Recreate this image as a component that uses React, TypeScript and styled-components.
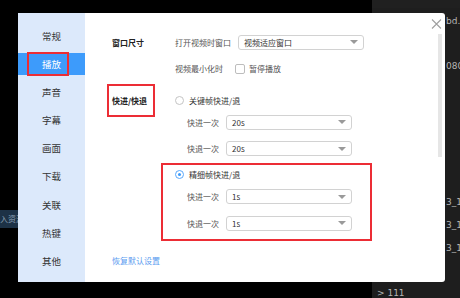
import styled, { createGlobalStyle, css } from "styled-components";

const GlobalStyle = createGlobalStyle`
  html, body {
    margin: 0;
    padding: 0;
    background: #000;
    width: 460px;
    height: 298px;
    overflow: hidden;
  }
  body {
    font-family: "Noto Sans CJK SC", "Noto Sans", sans-serif;
  }
`;

const redMark = css`
  position: relative;
  &::after {
    content: "";
    position: absolute;
    border: 2px solid #ec2d35;
    pointer-events: none;
  }
`;

const Desktop = styled.div`
  position: relative;
  width: 460px;
  height: 298px;
  display: grid;
  grid-template-columns: 372px 88px;
`;

const LeftPane = styled.div`
  background: #000;
  padding-top: 210px;
`;

const ImportBar = styled.div`
  width: 40px;
  height: 18px;
  background: #1d3246;
  color: #8ea2b6;
  font-size: 8px;
  line-height: 18px;
  white-space: nowrap;
  overflow: hidden;
`;

const RightPane = styled.div`
  background: #1e1e1e;
  display: flex;
  flex-direction: column;
  color: #b4b4b4;
  font-family: "DejaVu Sans", sans-serif;
  font-size: 9px;
  border-top: 8px solid #202020;
  overflow: hidden;
`;

const PaneLine = styled.div<{ $mt: number; $left?: number }>`
  margin-top: ${(p) => p.$mt}px;
  padding-left: ${(p) => p.$left ?? 74}px;
  height: 12px;
  line-height: 12px;
  white-space: nowrap;
`;

const Dialog = styled.div`
  position: absolute;
  left: 18px;
  top: 13px;
  width: 427px;
  height: 269px;
  background: #fff;
  border-radius: 0 3px 3px 0;
  display: flex;
  overflow: hidden;
`;

const Sidebar = styled.nav`
  width: 67px;
  background: #dce9fb;
  padding-top: 12px;
  display: flex;
  flex-direction: column;
  gap: 6.1px;
`;

const NavItem = styled.div<{ $active?: boolean; $marked?: boolean }>`
  height: 22px;
  display: flex;
  align-items: center;
  justify-content: center;
  font-size: 9.5px;
  color: ${(p) => (p.$active ? "#fff" : "#333")};
  background: ${(p) => (p.$active ? "#3d9bfb" : "transparent")};
  ${(p) =>
    p.$marked &&
    css`
      ${redMark}
      &::after {
        left: 9px;
        right: 16px;
        top: -1px;
        bottom: -1px;
      }
    `}
`;

const Content = styled.div`
  position: relative;
  flex: 1;
  padding: 21px 0 0 27px;
  display: flex;
  flex-direction: column;
`;

const Row = styled.div<{ $mt?: number; $indent?: number }>`
  display: flex;
  align-items: center;
  height: 16px;
  margin-top: ${(p) => p.$mt ?? 0}px;
  padding-left: ${(p) => p.$indent ?? 0}px;
  font-size: 8px;
  color: #555;
  white-space: nowrap;
`;

const SectionLabel = styled.div<{ $marked?: boolean }>`
  width: 63px;
  flex-shrink: 0;
  font-weight: 700;
  color: #222;
  ${(p) =>
    p.$marked &&
    css`
      ${redMark}
      &::after {
        left: -5px;
        width: 44px;
        top: -11px;
        bottom: -11px;
      }
    `}
`;

const FieldLabel = styled.div<{ $w: number }>`
  width: ${(p) => p.$w}px;
  flex-shrink: 0;
`;

const Select = styled.div`
  width: 126px;
  height: 15px;
  box-sizing: border-box;
  border: 1px solid #d2d2d2;
  border-radius: 3px;
  display: flex;
  align-items: center;
  justify-content: space-between;
  padding: 0 5px;
  color: #333;
  font-size: 8px;
  &::after {
    content: "";
    border-left: 4px solid transparent;
    border-right: 4px solid transparent;
    border-top: 4px solid #9a9a9a;
  }
`;

const Checkbox = styled.span`
  width: 10px;
  height: 10px;
  box-sizing: border-box;
  border: 1px solid #bdbdbd;
  border-radius: 2px;
  margin-right: 4px;
`;

const Radio = styled.span<{ $checked?: boolean }>`
  width: 9px;
  height: 9px;
  box-sizing: border-box;
  border-radius: 50%;
  border: 1px solid ${(p) => (p.$checked ? "#5aa8fb" : "#c4c4c4")};
  margin-right: 5px;
  display: flex;
  align-items: center;
  justify-content: center;
  &::after {
    content: "";
    width: 3px;
    height: 3px;
    border-radius: 50%;
    background: ${(p) => (p.$checked ? "#3d9bfb" : "transparent")};
  }
`;

const OptionText = styled.span`
  color: #333;
`;

const OptionGroup = styled.div<{ $mt?: number; $marked?: boolean }>`
  margin-left: 63px;
  width: 196px;
  margin-top: ${(p) => p.$mt ?? 0}px;
  display: flex;
  flex-direction: column;
  ${(p) =>
    p.$marked &&
    css`
      ${redMark}
      &::after {
        left: -14px;
        right: -1px;
        top: -4px;
        bottom: -10px;
      }
    `}
`;

const Section = styled.div<{ $mt?: number }>`
  margin-top: ${(p) => p.$mt ?? 0}px;
  display: flex;
  flex-direction: column;
`;

const ResetLink = styled.a`
  margin-top: 22px;
  font-size: 8px;
  color: #5b9cf0;
  height: 16px;
  line-height: 16px;
  text-decoration: none;
`;

const CloseButton = styled.button`
  position: absolute;
  top: 6px;
  right: 3px;
  width: 11px;
  height: 10px;
  padding: 0;
  border: none;
  background: none;
  display: flex;
`;

const Scrollbar = styled.div`
  position: absolute;
  top: 21px;
  right: 3px;
  width: 4px;
  height: 123px;
  background: #e6e6e6;
`;

const navItems = ["常规", "播放", "声音", "字幕", "画面", "下载", "关联", "热键", "其他"];

const SeekRows = ({ value, firstGap }: { value: string; firstGap: number }) => (
  <>
    <Row $mt={firstGap} $indent={12}>
      <FieldLabel $w={39}>快进一次</FieldLabel>
      <Select>{value}</Select>
    </Row>
    <Row $mt={10.5} $indent={12}>
      <FieldLabel $w={39}>快退一次</FieldLabel>
      <Select>{value}</Select>
    </Row>
  </>
);

export default function App() {
  return (
    <>
      <GlobalStyle />
      <Desktop>
        <LeftPane>
          <ImportBar>入资源</ImportBar>
        </LeftPane>
        <RightPane>
          <PaneLine $mt={7}>bd.c</PaneLine>
          <PaneLine $mt={33}>080</PaneLine>
          <PaneLine $mt={124}>3_10</PaneLine>
          <PaneLine $mt={11}>3_10</PaneLine>
          <PaneLine $mt={11}>3_11</PaneLine>
          <PaneLine $mt={33} $left={5}>
            &gt; 111
          </PaneLine>
        </RightPane>

        <Dialog>
          <Sidebar>
            {navItems.map((item) => (
              <NavItem key={item} $active={item === "播放"} $marked={item === "播放"}>
                {item}
              </NavItem>
            ))}
          </Sidebar>
          <Content>
            <CloseButton aria-label="关闭">
              <svg width="11" height="10" viewBox="0 0 11 10">
                <path d="M1 0.5 L10 9.5 M10 0.5 L1 9.5" stroke="#a0a0a0" strokeWidth="1.1" fill="none" />
              </svg>
            </CloseButton>
            <Scrollbar />

            <Section>
              <Row>
                <SectionLabel>窗口尺寸</SectionLabel>
                <FieldLabel $w={63}>打开视频时窗口</FieldLabel>
                <Select>视频适应窗口</Select>
              </Row>
              <Row $mt={10.5} $indent={63}>
                <FieldLabel $w={60}>视频最小化时</FieldLabel>
                <Checkbox />
                <span>暂停播放</span>
              </Row>
            </Section>

            <Section $mt={15.5}>
              <Row>
                <SectionLabel $marked>快进/快退</SectionLabel>
              </Row>
              <OptionGroup $mt={-16}>
                <Row>
                  <Radio />
                  <OptionText>关键帧快进/退</OptionText>
                </Row>
                <SeekRows value="20s" firstGap={6} />
              </OptionGroup>
              <OptionGroup $mt={10} $marked>
                <Row>
                  <Radio $checked />
                  <OptionText>精细帧快进/退</OptionText>
                </Row>
                <SeekRows value="1s" firstGap={6} />
              </OptionGroup>
            </Section>

            <ResetLink href="#">恢复默认设置</ResetLink>
          </Content>
        </Dialog>
      </Desktop>
    </>
  );
}
